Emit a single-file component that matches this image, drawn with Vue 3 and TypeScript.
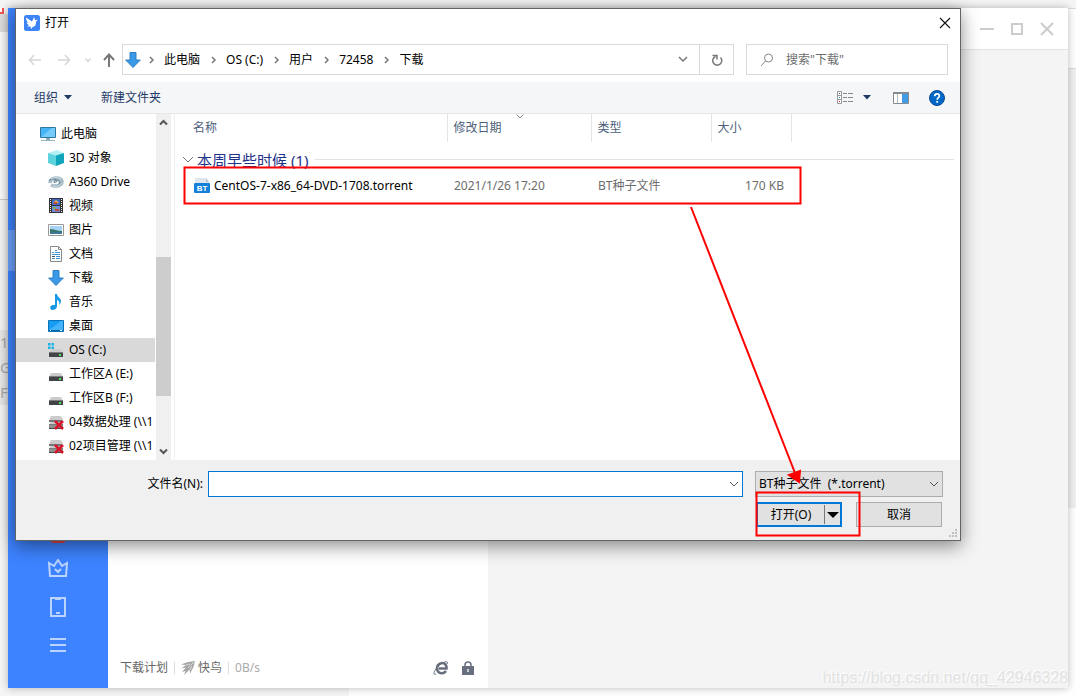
<script setup lang="ts">
import { ref } from 'vue'

interface TreeNode {
  label: string
  icon: string
  root?: boolean
}

const nodes: TreeNode[] = [
  { label: '此电脑', icon: 'pc', root: true },
  { label: '3D 对象', icon: 'cube' },
  { label: 'A360 Drive', icon: 'a360' },
  { label: '视频', icon: 'video' },
  { label: '图片', icon: 'picture' },
  { label: '文档', icon: 'doc' },
  { label: '下载', icon: 'download' },
  { label: '音乐', icon: 'music' },
  { label: '桌面', icon: 'desktop' },
  { label: 'OS (C:)', icon: 'system' },
  { label: '工作区A (E:)', icon: 'drive' },
  { label: '工作区B (F:)', icon: 'drive' },
  { label: '04数据处理 (\\\\1', icon: 'offline' },
  { label: '02项目管理 (\\\\1', icon: 'offline' },
]

const crumbs = ['此电脑', 'OS (C:)', '用户', '72458', '下载']
const selected = ref('OS (C:)')
const fileName = ref('')
const query = ref('')
const filter = ref('torrent')
</script>

<template>
  <div class="screen">
    <div class="behind-left">
      <div class="strip-tab"></div>
      <div class="strip-bar"></div>
      <div class="strip-list"></div>
      <div class="strip-cells"><span>1</span><span>G</span><span>FE</span></div>
    </div>
    <div class="behind-right"><div class="right-top"></div><div class="right-mid"></div></div>
    <div class="behind-bottom"></div>

    <section class="app-window">
      <nav class="rail">
        <div class="rail-active"></div>
        <div class="rail-icons">
          <i class="badge"></i>
          <button aria-label="会员">
            <svg width="20" height="18" viewBox="0 0 20 18"><path d="M1 4l5 3 4-6 4 6 5-3-1 13H2z M7 10l3 3 3-3" /></svg>
          </button>
          <button aria-label="手机">
            <svg width="18" height="20" viewBox="0 0 18 20"><path d="M2 1h14v18H2zM6 2h6M7 16h4" /></svg>
          </button>
          <button aria-label="菜单">
            <svg width="18" height="16" viewBox="0 0 18 16"><path d="M1 2h16M1 8h16M1 14h16" /></svg>
          </button>
        </div>
      </nav>
      <main class="tasks">
        <footer class="status">
          <span class="plan">下载计划</span>
          <i class="sep"></i>
          <svg width="14" height="14" viewBox="0 0 14 14"><path fill="#a6a6a6" d="M0 3.500L7 1l7-1-1.500 6L9 12.500 8.500 8.500 3 14l1.500-4L1 11l4-4.500-4.500 1L5 4z" /><path d="M7 7l6-6M5 4l4-1M9 9l2-4" stroke="#fff" stroke-width=".6" /></svg>
          <span class="bird">快鸟</span>
          <i class="sep"></i>
          <span class="speed">0B/s</span>
          <button class="browser" aria-label="浏览器">
            <svg width="16" height="16" viewBox="0 0 16 16" stroke="#687080"><path d="M13 11C11 14 6 14 4.500 10.500 3 6 6 3 9 3c3 0 5 2.500 4.500 5.500H6" stroke-width="2.600" /><path d="M3 14c-4 2-2-5 5-10 4-3 8-3 6 0" stroke-width="1" /></svg>
          </button>
          <button aria-label="锁定">
            <svg width="12" height="15" viewBox="0 0 12 15"><path d="M3 7V4a3 3 0 0 1 6 0v3" fill="none" stroke="#687080" stroke-width="1.500" /><path d="M0 5h12v9H0z" fill="#687080" /><path d="M5 8h2v3H5z" fill="#c8ccd4" /></svg>
          </button>
        </footer>
      </main>
      <aside class="detail">
        <header>
          <button aria-label="最小化"><svg width="14" height="14" viewBox="0 0 14 14"><path d="M0 7h14" /></svg></button>
          <button aria-label="最大化"><svg width="14" height="14" viewBox="0 0 14 14"><path d="M2 2h10v10H2z" /></svg></button>
          <button aria-label="关闭"><svg width="14" height="14" viewBox="0 0 14 14"><path d="M1 1l12 12M13 1L1 13" /></svg></button>
        </header>
        <p class="watermark">https://blog.csdn.net/qq_42946328</p>
      </aside>
    </section>

    <section class="dialog" role="dialog" aria-labelledby="dialog-title">
      <header class="title-bar">
        <svg width="16" height="16" viewBox="0 0 16 16"><rect width="16" height="16" rx="2.500" fill="#3c83f8" /><path d="M2 2.500L8 6.500 10.200 2l.8 3.200 3-.7-2 2.200c.3 3-1 5-3.500 5.300L7.500 14 6.300 11.600 3 11.500l2-1.300C3.500 9.500 2.800 8.500 2.600 7.500l1.600.2C2.800 6.300 1.800 4.500 2 2.500z" fill="#fff" /></svg>
        <h1 id="dialog-title">打开</h1>
        <button class="close" aria-label="关闭"><svg width="12" height="12" viewBox="0 0 12 12"><path d="M1 1l10 10M11 1L1 11" stroke="#111" stroke-width="1.100" /></svg></button>
      </header>

      <div class="nav-row">
        <button class="faded" aria-label="后退"><svg width="14" height="12" viewBox="0 0 14 12"><path d="M13 6H2M6 1L1.500 6 6 11" /></svg></button>
        <button class="faded" aria-label="前进"><svg width="14" height="12" viewBox="0 0 14 12"><path d="M1 6h11M8 1l4.500 5L8 11" /></svg></button>
        <button class="faded recent" aria-label="最近位置"><svg width="6" height="6" viewBox="0 0 6 6"><path d="M0.500 1.500L3 4.500l2.500-3" /></svg></button>
        <button class="up" aria-label="上移"><svg width="12" height="14" viewBox="0 0 12 14"><path d="M6 14V2M1 7l5-5.500L11 7" /></svg></button>
        <div class="address">
          <svg class="down-arrow" width="16" height="16" viewBox="0 0 16 16"><path d="M5 .5h6v7.500h4.300L8 15.500.7 8H5z" fill="#3a9ae8" stroke="#2e7fc4" /></svg>
          <template v-for="c in crumbs" :key="c">
            <svg class="chev" width="5" height="8" viewBox="0 0 5 8"><path d="M1 1l3 3-3 3" /></svg>
            <button class="crumb">{{ c }}</button>
          </template>
          <button class="history" aria-label="以前的位置"><svg width="10" height="7" viewBox="0 0 10 7"><path d="M1 1l4 4 4-4" /></svg></button>
          <button class="refresh" aria-label="刷新"><svg width="12" height="12" viewBox="0 0 12 12"><path d="M9.500 3.500a4.500 4.500 0 1 1-5-1" /><path d="M1.500 1.500H6v4" /></svg></button>
        </div>
        <label class="search">
          <svg width="14" height="14" viewBox="0 0 14 14"><circle cx="8.500" cy="5" r="4" /><path d="M5.500 8L1 13" /></svg>
          <input v-model="query" type="text" placeholder='搜索"下载"' aria-label="搜索" />
        </label>
      </div>

      <div class="toolbar">
        <button>组织<svg width="8" height="5" viewBox="0 0 8 5"><path d="M0 0h8L4 4.500z" fill="#1e3a66" /></svg></button>
        <button class="new-folder">新建文件夹</button>
        <div class="views">
          <button aria-label="更改视图"><svg width="17" height="13" viewBox="0 0 17 13"><path d="M.5.5h4v12h-4zM.5 4.500h4M.5 8.500h4" fill="#fff" stroke="#999" /><path d="M2 2h1v1H2z" fill="#555" /><path d="M2 6h1v1H2z" fill="#2b7de0" /><path d="M2 10h1v1H2z" fill="#d33" /><path d="M6 2.500h4m1 0h5M6 6.500h4m1 0h5M6 10.500h4m1 0h5" stroke="#888" /></svg></button>
          <button class="more" aria-label="更多选项"><svg width="8" height="5" viewBox="0 0 8 5"><path d="M0 0h8L4 4.500z" fill="#1e3a66" /></svg></button>
          <button class="preview" aria-label="预览窗格"><svg width="16" height="12" viewBox="0 0 16 12"><path d="M.5.5h15v11H.5z" fill="#fff" stroke="#868b91" /><path d="M0 0h16v2H0z" fill="#868b91" /><path d="M9 2h6v9H9z" fill="#419be5" /><path d="M4.500 2v9" stroke="#bbb" /></svg></button>
          <button aria-label="帮助"><svg width="16" height="16" viewBox="0 0 16 16"><circle cx="8" cy="8" r="7.500" fill="#0067c8" stroke="#0c4a94" /><path d="M5.700 6.300C5.700 3 10.400 3.300 10.400 6 10.400 7.600 8.200 7.700 8.200 9.700M8.200 11v1.800" fill="none" stroke="#fff" stroke-width="1.700" /></svg></button>
        </div>
      </div>

      <div class="body">
        <ul class="tree">
          <li v-for="n in nodes" :key="n.label">
            <button :class="{ root: n.root, current: selected === n.label }" @click="selected = n.label">
              <svg width="16" height="16" viewBox="0 0 16 16">
                <g v-if="n.icon === 'pc'"><path d="M.5 1.500h15v10H.5z" fill="#45b4f7" stroke="#31789f" /><path d="M1 11L12 2h3v9z" fill="#75cbfb" /><path d="M6 12h4v2H6z" fill="#8aa9ba" /><path d="M1 14.500h14" stroke="#9bb4c3" /></g>
                <g v-else-if="n.icon === 'cube'"><path d="M0 3l9-3 7 3-7 3z" fill="#b4f1f5" /><path d="M0 3l8 2.500V16l-8-3z" fill="#5fd3dd" /><path d="M8 5.500L16 3v10l-8 3z" fill="#10a5bb" /></g>
                <g v-else-if="n.icon === 'a360'" fill="none"><path d="M2 9C2 2 14 3 14 7.500 14 12 7 13 3 11" stroke="#a3bac5" stroke-width="3.500" /><path d="M1 6.500c5-3 9-1 7 1.500-2 1-3-.5-1-1.500 3-1 6 1 4 4" stroke="#6f8c9c" stroke-width="1.200" /><path d="M3 5c3-2 7-2 10 0M4 12c4 1 8 0 10-3" stroke="#d2dfe5" /></g>
                <g v-else-if="n.icon === 'video'"><path d="M1 0h14v15H1z" fill="#333" /><path d="M4 1h8v6H4z" fill="#4169c8" /><path d="M4 8h8v6H4z" fill="#6e8ed8" /><path d="M5 5l3-3 3 3z" fill="#f0bf38" /><path d="M6 4h3v2H6zM7 11h4v2H7z" fill="#cf443a" /><path d="M5 9h3v2H5z" fill="#77b452" /><path d="M2.500 1v14M13.500 1v14" stroke="#eee" stroke-dasharray="1 1" /></g>
                <g v-else-if="n.icon === 'picture'"><path d="M.5 2.500h15v11H.5z" fill="#fff" stroke="#999" /><path d="M2 4h12v8H2z" fill="#a6d3f6" /><path d="M2 7c4 0 7 2 12 2v3H2z" fill="#39776e" /><path d="M2 11c4-1 7 0 12-1v2H2z" fill="#4278a5" /></g>
                <g v-else-if="n.icon === 'doc'"><path d="M2.500.5h8l3 3v12h-11z" fill="#fff" stroke="#8b8b8b" /><path d="M10.500.5v3h3" fill="none" stroke="#8b8b8b" /><path d="M4 6.500h2m1-2h2m-2 2h5M4 8.500h8M8 10.500h4M4 12.500h3m1 0h4" stroke="#3d92cf" /><path d="M4 10h3v1H4z" fill="#555" /></g>
                <path v-else-if="n.icon === 'download'" d="M5 .5h6v7.500h4.300L8 15.500.7 8H5z" fill="#3a9ae8" stroke="#2e7fc4" />
                <path v-else-if="n.icon === 'music'" d="M7 0h2c0 3 4 4 4 7 0 2-1 3-2 4 1-3 0-4-2-5v6c0 3-3 4-5 4-3-1-2-5 1-5h2z" fill="#159ae5" />
                <g v-else-if="n.icon === 'desktop'"><path d="M.5 2.500h15v11H.5z" fill="#169cf2" stroke="#0873b9" /><path d="M1 12L13 3h2v9z" fill="#42b2fa" /><path d="M1 12.500h14" stroke="#0563a3" /><path d="M2 12.500h1m9 0h2" stroke="#fff" /></g>
                <g v-else>
                  <path d="M3 7h10l2 4H1z" fill="#cbcbcb" /><path d="M1 10.500h14V15H1z" fill="#424547" /><path d="M1 10h14v1H1z" fill="#7a7c7d" /><path d="M11 12h2v2h-2z" fill="#48e35b" />
                  <path v-if="n.icon === 'system'" d="M0 1h2.500v2.500H0zM3.500 1H6v2.500H3.500zM0 4.500h2.500V7H0zM3.500 4.500H6V7H3.500z" fill="#18b4e8" />
                  <g v-if="n.icon === 'offline'"><path d="M3 2h10l2 4H1z" fill="#cbcbcb" /><path d="M1 6h13v2H1z" fill="#777" /><path d="M1 11h14v3H1z" fill="#909090" /><path d="M7 7l8 8M15 7l-8 8" stroke="#d8152a" stroke-width="2.500" /></g>
                </g>
              </svg>
              <span>{{ n.label }}</span>
            </button>
          </li>
        </ul>
        <div class="scroll">
          <button aria-label="向上滚动"><svg width="9" height="7" viewBox="0 0 9 7"><path d="M1 5.500L4.500 2 8 5.500" /></svg></button>
          <div class="track"><div class="thumb"></div></div>
          <button aria-label="向下滚动"><svg width="9" height="7" viewBox="0 0 9 7"><path d="M1 1.500L4.500 5 8 1.500" /></svg></button>
        </div>

        <div class="files">
          <table>
            <colgroup><col class="c-name" /><col class="c-date" /><col class="c-type" /><col class="c-size" /><col /></colgroup>
            <thead>
              <tr>
                <th>名称</th>
                <th class="sorted">修改日期<svg width="8" height="5" viewBox="0 0 8 5"><path d="M.5.5L4 4 7.500.5" /></svg></th>
                <th>类型</th>
                <th>大小</th>
                <td></td>
              </tr>
            </thead>
            <tbody>
              <tr class="group">
                <td colspan="5">
                  <div><svg width="12" height="7" viewBox="0 0 12 7"><path d="M1 1l5 5 5-5" /></svg><span>本周早些时候 (1)</span><i></i></div>
                </td>
              </tr>
              <tr class="file">
                <td>
                  <div>
                    <svg width="16" height="16" viewBox="0 0 16 16"><path d="M1 0h11l3 4v8H1z" fill="#dfe6ee" /><path d="M12 0v4h3" fill="#b8c6d4" /><rect y="5" width="16" height="10" rx="1" fill="#1580d8" /><text x="8" y="13">BT</text></svg>
                    <span>CentOS-7-x86_64-DVD-1708.torrent</span>
                  </div>
                </td>
                <td>2021/1/26 17:20</td>
                <td>BT种子文件</td>
                <td class="size">170 KB</td>
                <td></td>
              </tr>
            </tbody>
          </table>
        </div>
      </div>

      <footer class="actions">
        <div class="name-row">
          <label for="file-name">文件名(N):</label>
          <div class="combo">
            <input id="file-name" v-model="fileName" type="text" />
            <button aria-label="历史记录"><svg width="10" height="7" viewBox="0 0 10 7"><path d="M1 1l4 4 4-4" /></svg></button>
          </div>
          <div class="filter">
            <select v-model="filter" aria-label="文件类型"><option value="torrent">BT种子文件&nbsp; (*.torrent)</option></select>
            <svg width="10" height="7" viewBox="0 0 10 7"><path d="M1 1l4 4 4-4" /></svg>
          </div>
        </div>
        <div class="button-row">
          <div class="split">
            <button>打开(O)</button>
            <button class="drop" aria-label="打开方式"><svg width="12" height="6" viewBox="0 0 12 6"><path d="M0 0h12L6 6z" /></svg></button>
          </div>
          <button class="cancel">取消</button>
        </div>
        <svg class="grip" width="8" height="8" viewBox="0 0 8 8"><path d="M6 0h2v2H6zM3 3h2v2H3zM6 3h2v2H6zM0 6h2v2H0zM3 6h2v2H3zM6 6h2v2H6z" fill="#bfbfbf" /></svg>
      </footer>
    </section>

    <svg class="marks" width="1076" height="696" viewBox="0 0 1076 696">
      <rect x="184.500" y="167.500" width="616" height="36" />
      <rect x="756.500" y="492.500" width="103" height="43" />
      <path d="M691 207l104 266" />
      <path class="head" d="M799 482l-10-7 11-4z" />
    </svg>
  </div>
</template>

<style>
body { margin: 0; }
</style>

<style scoped>
.screen {
  position: relative;
  height: 100vh;
  overflow: hidden;
  background: #f5f5f5;
  color: #000;
  font: 12px/16px "Noto Sans", "Noto Sans CJK SC", sans-serif;
}
button { display: flex; align-items: center; padding: 0; border: 0; background: none; color: inherit; font: inherit; }
svg { flex: none; fill: none; }

.behind-left { position: absolute; top: 8px; bottom: 0; left: 0; width: 16px; color: #aaa; font-size: 15px; line-height: 25px; }
.strip-tab { height: 4px; width: 2px; border-right: 2px solid #e55; border-bottom: 2px solid #e55; background: #fff; }
.strip-bar { height: 18px; background: #ddd; }
.strip-list { height: 167px; border-bottom: 1px solid #ccc; background: #fafafa; }
.strip-cells { display: flex; flex-direction: column; margin-top: 130px; background: #e8e8e8; }
.behind-right { position: absolute; top: 8px; right: 0; bottom: 0; width: 8px; border-top: 1px solid #ddd; background: #fff; }
.right-top { height: 59px; border-bottom: 1px solid #ddd; }
.right-mid { height: 439px; background: #f0f0f0; }
.behind-bottom { position: absolute; right: 0; bottom: 0; left: 349px; height: 8px; background: #fff; }

.app-window { position: absolute; inset: 8px; display: flex; box-shadow: 0 0 8px rgba(0, 0, 0, .28); }
.rail { display: flex; flex-direction: column; width: 100px; background: #3d82fe; }
.rail-active { height: 41px; margin-top: 222px; background: #6ba1ff; }
.rail-icons { display: flex; flex-direction: column; align-items: center; gap: 20px; margin-top: auto; padding-bottom: 35px; }
.rail-icons svg { stroke: #bad4ff; stroke-width: 2; }
.rail-icons .badge { width: 16px; height: 4px; margin-bottom: -4px; border-radius: 0 0 4px 4px; background: #e34545; }
.tasks { display: flex; flex: none; flex-direction: column; justify-content: flex-end; width: 380px; background: #fff; }
.status { display: flex; align-items: center; height: 40px; padding: 0 14px 0 12px; color: #666; }
.sep { width: 1px; height: 12px; margin: 0 6px; background: #ddd; }
.bird { margin-left: 3px; }
.speed { color: #aaa; }
.browser { margin: 0 13px 0 auto; }
.detail { display: flex; flex: 1; flex-direction: column; justify-content: space-between; background: #f4f4f4; }
.detail header { display: flex; align-items: center; justify-content: flex-end; gap: 16px; height: 41px; padding-right: 14px; border-bottom: 1px solid #e3e3e3; background: #fff; }
.detail header svg { stroke: #ccc; stroke-width: 2; }
.watermark { margin: 0; color: #e2e2e2; font: 16px/20px "Liberation Sans", sans-serif; text-align: right; text-shadow: -1px -1px #fff; }

.dialog {
  position: absolute;
  inset: 8px 115px 155px 15px;
  display: flex;
  flex-direction: column;
  border: 1px solid #5f6469;
  background: #fff;
  box-shadow: 0 5px 17px rgba(0, 0, 0, .45);
}
.title-bar { display: flex; align-items: center; height: 28px; padding: 0 9px 0 8px; }
h1 { margin: 0 0 0 5px; font: inherit; }
.close { margin-left: auto; }
.nav-row { display: flex; align-items: center; padding: 7px 12px; }
.nav-row button svg { stroke: #777; stroke-width: 2; }
.nav-row .faded { margin-right: 15px; }
.nav-row .faded svg { stroke: #d6d6d6; stroke-width: 1.500; }
.nav-row .recent { margin-right: 12px; margin-left: -1px; }
.nav-row .up { margin-right: 7px; }
.address { display: flex; flex: 1; align-items: center; height: 29px; padding-left: 2px; border: 1px solid #d9d9d9; }
.chev { margin: 0 10px 0 11px; stroke: #777; stroke-width: 1.500; }
.down-arrow + .chev { margin-left: 8px; }
.history { margin: 0 11px 0 auto; }
.address .history svg, .address .refresh svg { stroke: #777; stroke-width: 1.500; }
.refresh { align-self: stretch; justify-content: center; width: 34px; border-left: 1px solid #d9d9d9; }
.search { display: flex; align-items: center; width: 200px; height: 29px; margin-left: 12px; border: 1px solid #d9d9d9; }
.search svg { margin: 0 12px 0 13px; stroke: #888; }
.search input { flex: 1; min-width: 0; padding: 0; border: 0; outline: 0; font: inherit; }
.search input::placeholder { color: #6d6d6d; opacity: 1; }
.toolbar { display: flex; align-items: center; height: 31px; padding: 0 15px 0 18px; border-bottom: 1px solid #e5e7ea; background: #f5f6f8; color: #1e3a66; }
.toolbar button:first-child { gap: 6px; }
.new-folder { margin-left: 29px; }
.views { display: flex; align-items: center; margin-left: auto; }
.more { margin: 0 22px 0 9px; }
.preview { margin-right: 20px; }

.body { display: flex; flex: 1; min-height: 0; }
.tree { box-sizing: border-box; width: 139px; margin: 0; padding: 8px 0 0; overflow: hidden; list-style: none; }
.tree button { gap: 5px; width: 100%; height: 24px; padding-left: 32px; white-space: nowrap; }
.tree button.root { padding-left: 24px; }
.tree button.current { background: #d9d9d9; }
.scroll { display: flex; flex-direction: column; width: 15px; margin-left: 1px; background: #f0f0f0; }
.scroll button { justify-content: center; height: 17px; }
.scroll svg { stroke: #555; stroke-width: 2; }
.track { display: flex; flex: 1; flex-direction: column; }
.thumb { height: 44.500%; margin-top: auto; margin-bottom: 47px; background: #cdcdcd; }
.files { flex: 1; margin-left: 3px; border-left: 1px solid #f0f0f0; }
table { width: 100%; border-collapse: collapse; table-layout: fixed; }
.c-name { width: 272px; }
.c-date { width: 144px; }
.c-type { width: 120px; }
.c-size { width: 80px; }
th, td { box-sizing: border-box; padding: 0 7px; text-align: left; font-weight: normal; }
th { height: 28px; border-right: 1px solid #e5e5e5; color: #4c607a; }
th:first-child { padding-left: 18px; }
th + th { padding-left: 6px; }
.sorted { position: relative; }
.sorted svg { position: absolute; top: 0; left: 68px; stroke: #888; }
.group td { height: 33px; padding: 2px 6px 0 7px; }
.group div { display: flex; align-items: center; color: #1e3287; font-size: 15px; line-height: 20px; }
.group svg { stroke: #777; }
.group span { margin: 0 7px 0 3px; }
.group i { flex: 1; height: 1px; background: #e2e2e2; }
.file td { height: 22px; color: #6d6d6d; }
.file td:first-child { padding-left: 19px; color: #000; white-space: nowrap; }
.file div { display: flex; align-items: center; gap: 4px; }
.file text { fill: #fff; font: bold 8px "Liberation Sans", sans-serif; text-anchor: middle; }
.file .size { text-align: right; }

.actions { position: relative; display: flex; flex-direction: column; gap: 5px; height: 69px; padding: 11px 17px 0 0; background: #f0f0f0; }
.name-row { display: flex; align-items: center; }
.name-row label { width: 187px; margin-right: 5px; text-align: right; }
.combo { display: flex; flex: 1; height: 24px; border: 1px solid #0078d7; background: #fff; }
.combo input { flex: 1; min-width: 0; padding: 0 4px; border: 0; outline: 0; font: inherit; }
.combo button { padding: 0 3px; }
.combo svg, .filter svg { stroke: #555; }
.filter { display: grid; align-items: center; width: 188px; margin-left: 12px; }
.filter select { grid-area: 1 / 1; width: 100%; height: 26px; padding: 0 3px; border: 1px solid #adadad; border-radius: 0; background: #e1e1e1; color: #000; font: inherit; appearance: none; }
.filter svg { grid-area: 1 / 1; justify-self: end; margin-right: 4px; pointer-events: none; }
.button-row { display: flex; justify-content: flex-end; gap: 14px; padding-right: 1px; }
.split { display: flex; box-sizing: border-box; width: 86px; height: 25px; border: 2px solid #0078d7; background: #e1e1e1; }
.split button { flex: 1; justify-content: center; }
.split .drop { flex: none; width: 16px; margin: 1px 0; border-left: 1px solid #777; }
.drop svg { fill: #000; }
.cancel { box-sizing: border-box; justify-content: center; width: 86px; height: 25px; border: 1px solid #adadad; background: #e1e1e1; }
.grip { position: absolute; right: 3px; bottom: 3px; }

.marks { position: absolute; top: 0; left: 0; stroke: #f00; stroke-width: 2; pointer-events: none; }
.marks .head { fill: #f00; }
</style>
